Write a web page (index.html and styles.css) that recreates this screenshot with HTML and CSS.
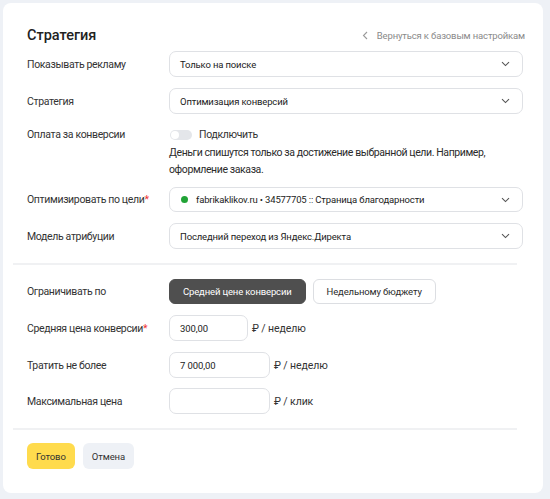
FILE: index.html
```html
<!DOCTYPE html>
<html lang="ru">
<head>
<meta charset="utf-8">
<link rel="stylesheet" href="styles.css">
</head>
<body>
<div class="card">
  <div class="head">
    <div class="title">Стратегия</div>
    <a class="back"><svg class="back-ic" width="6" height="9" viewBox="0 0 6 9"><path d="M5 1 L1.5 4.5 L5 8" fill="none" stroke="#9a9a9a" stroke-width="1.1"/></svg>Вернуться к базовым настройкам</a>
  </div>

  <div class="row r1">
    <div class="label">Показывать рекламу</div>
    <div class="select"><span>Только на поиске</span><svg class="chev" width="9" height="6" viewBox="0 0 9 6"><path d="M1 1.2 L4.5 4.6 L8 1.2" fill="none" stroke="#555" stroke-width="1.1"/></svg></div>
  </div>

  <div class="row r2">
    <div class="label">Стратегия</div>
    <div class="select"><span>Оптимизация конверсий</span><svg class="chev" width="9" height="6" viewBox="0 0 9 6"><path d="M1 1.2 L4.5 4.6 L8 1.2" fill="none" stroke="#555" stroke-width="1.1"/></svg></div>
  </div>

  <div class="row r3">
    <div class="label lt">Оплата за конверсии</div>
    <div class="ctl">
      <div class="toggle-line"><span class="toggle"><span class="knob"></span></span><span>Подключить</span></div>
      <div class="desc">Деньги спишутся только за достижение выбранной цели. Например, оформление заказа.</div>
    </div>
  </div>

  <div class="row r4">
    <div class="label">Оптимизировать по цели<span class="req">*</span></div>
    <div class="select sm"><span class="goal"><span class="dot"></span>fabrikaklikov.ru • 34577705 :: Страница благодарности</span><svg class="chev" width="9" height="6" viewBox="0 0 9 6"><path d="M1 1.2 L4.5 4.6 L8 1.2" fill="none" stroke="#555" stroke-width="1.1"/></svg></div>
  </div>

  <div class="row r5">
    <div class="label">Модель атрибуции</div>
    <div class="select"><span>Последний переход из Яндекс.Директа</span><svg class="chev" width="9" height="6" viewBox="0 0 9 6"><path d="M1 1.2 L4.5 4.6 L8 1.2" fill="none" stroke="#555" stroke-width="1.1"/></svg></div>
  </div>

  <div class="divider d1"></div>

  <div class="row r6">
    <div class="label">Ограничивать по</div>
    <div class="btns">
      <span class="seg on">Средней цене конверсии</span>
      <span class="seg">Недельному бюджету</span>
    </div>
  </div>

  <div class="row r7">
    <div class="label">Средняя цена конверсии<span class="req">*</span></div>
    <div class="inp-line"><span class="inp w1">300,00</span><span class="unit">₽ / неделю</span></div>
  </div>

  <div class="row r8">
    <div class="label">Тратить не более</div>
    <div class="inp-line"><span class="inp w2">7 000,00</span><span class="unit">₽ / неделю</span></div>
  </div>

  <div class="row r9">
    <div class="label">Максимальная цена</div>
    <div class="inp-line"><span class="inp w2"></span><span class="unit">₽ / клик</span></div>
  </div>

  <div class="divider d2"></div>

  <div class="foot">
    <span class="btn yes">Готово</span>
    <span class="btn no">Отмена</span>
  </div>
</div>
</body>
</html>
```

FILE: styles.css
```css
html, body {
  margin: 0;
  padding: 0;
  background: #eef1f6;
}
body {
  padding: 3px 0 0 3px;
  font-family: Roboto, "Noto Sans", sans-serif;
  font-size: 10.5px;
  letter-spacing: -0.35px;
  color: #2b2b2b;
}
.card {
  width: 540px;
  height: 490px;
  box-sizing: border-box;
  background: #fff;
  border-radius: 8px;
  padding: 22px 20px 0 24px;
}
.head {
  display: flex;
  align-items: center;
  justify-content: space-between;
  height: 20px;
}
.title {
  font-size: 14.5px;
  font-weight: 500;
  letter-spacing: 0;
  color: #222;
}
.back {
  display: flex;
  align-items: center;
  gap: 7px;
  color: #8a8a8a;
  font-size: 9.5px;
  letter-spacing: -0.15px;
  margin-right: -2px;
}
.back-ic { margin-right: 2px; }
.row {
  display: flex;
  align-items: center;
}
.label {
  width: 142px;
  flex: none;
  color: #333;
}
.label.lt { align-self: flex-start; line-height: 19px; }
.req { color: #f0312f; }
.select {
  flex: 1;
  height: 26px;
  box-sizing: border-box;
  border: 1px solid #dfe1e5;
  border-radius: 7px;
  display: flex;
  align-items: center;
  justify-content: space-between;
  padding: 0 12px 0 10px;
  color: #222;
  font-size: 9.5px;
  letter-spacing: -0.15px;
}
.select.sm { height: 25px; }
.r1 { margin-top: 6px; }
.r2 { margin-top: 11px; }
.r3 { margin-top: 11px; align-items: flex-start; }
.r4 { margin-top: 9px; }
.r5 { margin-top: 11px; }
.ctl { flex: 1; }
.toggle-line {
  display: flex;
  align-items: center;
  height: 19px;
  gap: 7px;
  color: #333;
}
.toggle {
  width: 22px;
  height: 10px;
  border-radius: 5px;
  background: #e4e6ea;
  position: relative;
  margin-left: 1px;
}
.knob {
  position: absolute;
  left: 1px;
  top: 1px;
  width: 8px;
  height: 8px;
  border-radius: 50%;
  background: #fff;
}
.desc {
  line-height: 17px;
  color: #2b2b2b;
  letter-spacing: -0.4px;
  width: 345px;
}
.goal { display: flex; align-items: center; }
.dot {
  width: 7px;
  height: 7px;
  border-radius: 50%;
  background: #21a336;
  margin: 0 8px 0 1px;
}
.divider {
  height: 2px;
  background: #f0f1f3;
  margin: 0 6px 0 -14px;
}
.d1 { margin-top: 14px; }
.r6 { margin-top: 14px; }
.btns { display: flex; gap: 7px; }
.seg {
  height: 25px;
  box-sizing: border-box;
  border: 1px solid #dcdee2;
  border-radius: 6px;
  padding: 0 13px;
  display: flex;
  align-items: center;
  color: #2b2b2b;
  font-size: 9.5px;
  letter-spacing: -0.15px;
}
.seg.on {
  background: #4f4f4f;
  border-color: #4f4f4f;
  color: #fff;
  padding: 0 13px;
}
.r7 { margin-top: 11px; }
.r8 { margin-top: 11px; }
.r9 { margin-top: 10px; }
.inp-line { display: flex; align-items: center; gap: 4px; }
.inp {
  height: 26px;
  box-sizing: border-box;
  border: 1px solid #dfe1e5;
  border-radius: 7px;
  display: flex;
  align-items: center;
  padding: 0 10px;
  color: #222;
  font-size: 9.5px;
  letter-spacing: -0.1px;
}
.w1 { width: 79px; }
.w2 { width: 101px; }
.unit { color: #333; letter-spacing: -0.1px; }
.d2 { margin-top: 14px; }
.foot {
  display: flex;
  gap: 8px;
  margin-top: 13px;
}
.btn {
  height: 26px;
  border-radius: 6px;
  display: flex;
  align-items: center;
  padding: 0 9px;
  font-size: 9.5px;
  letter-spacing: -0.1px;
  color: #333;
}
.yes { background: #ffdb4d; }
.no { background: #eef1f6; }
```
